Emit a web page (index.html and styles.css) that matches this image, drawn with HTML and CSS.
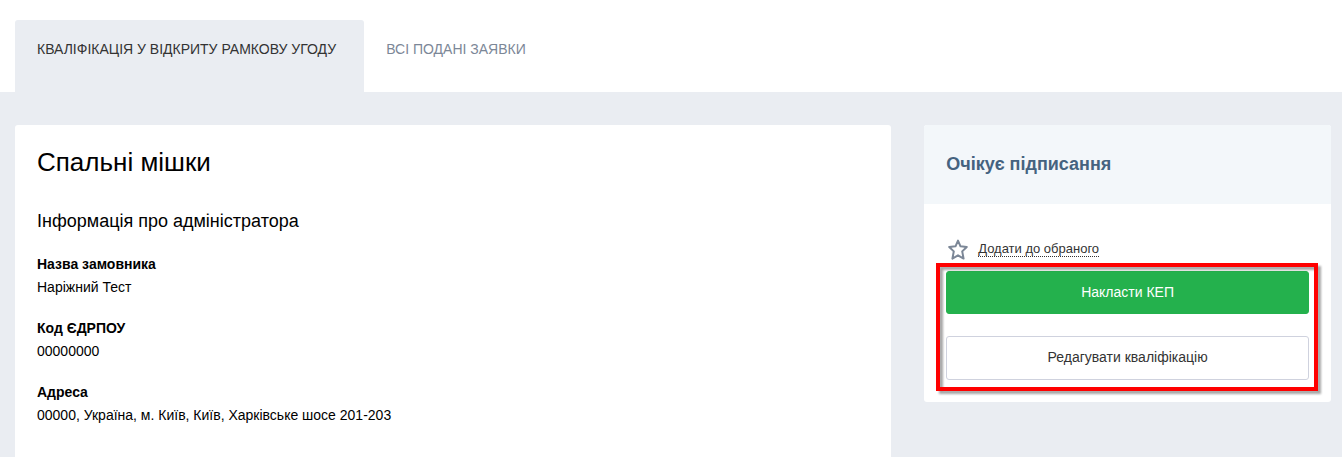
FILE: index.html
```html
<!DOCTYPE html>
<html lang="uk">
<head>
  <meta charset="UTF-8">
  <meta name="viewport" content="width=device-width, initial-scale=1.0">
  <title>Спальні мішки</title>
  <link rel="stylesheet" href="styles.css">
</head>
<body>

  <nav class="tabs">
    <a href="#qualification" class="tab active">Кваліфікація у відкриту рамкову угоду</a>
    <a href="#bids" class="tab">Всі подані заявки</a>
  </nav>

  <main class="content">
    <section class="card tender" id="qualification">
      <h1>Спальні мішки</h1>
      <h2>Інформація про адміністратора</h2>
      <dl class="details">
        <div class="detail">
          <dt>Назва замовника</dt>
          <dd>Наріжний Тест</dd>
        </div>
        <div class="detail">
          <dt>Код ЄДРПОУ</dt>
          <dd>00000000</dd>
        </div>
        <div class="detail">
          <dt>Адреса</dt>
          <dd>00000, Україна, м. Київ, Київ, Харківське шосе 201-203</dd>
        </div>
      </dl>
    </section>

    <aside class="card sidebar">
      <div class="status">Очікує підписання</div>
      <div class="sidebar-body">
        <a href="#favorite" class="favorite">
          <svg class="star" viewBox="0 0 24 24" aria-hidden="true">
            <path d="M12 3.6 L14.5 9.3 L20.8 10 L16.2 14.4 L17.6 21.6 L12 18.3 L6.4 21.6 L7.8 14.4 L3.2 10 L9.5 9.3 Z"/>
          </svg>
          <span class="favorite-text">Додати до обраного</span>
        </a>
        <div class="actions">
          <button type="button" class="btn btn-primary">Накласти КЕП</button>
          <button type="button" class="btn">Редагувати кваліфікацію</button>
        </div>
      </div>
    </aside>
  </main>

</body>
</html>
```
FILE: styles.css
```css
/* Basic Reset */
* {
  margin: 0;
  padding: 0;
  box-sizing: border-box;
}

body {
  display: flex;
  flex-direction: column;
  min-height: 100vh;
  font-family: "Liberation Sans", Arial, sans-serif;
  font-size: 14px;
  line-height: 20px;
  color: #000;
  background: #eaedf2;
}

/* Tabs */
.tabs {
  display: flex;
  padding: 20px 15px 0;
  background: #fff;
}

.tab {
  padding: 19px 28px 33px 22px;
  border-radius: 3px 3px 0 0;
  color: #7c8797;
  text-decoration: none;
  text-transform: uppercase;
}

.tab.active {
  color: #333;
  background: #eaedf2;
}

/* Page columns */
.content {
  display: grid;
  flex: 1;
  grid-template-columns: 28fr 13fr;
  gap: 33px;
  padding: 33px 11px 0 15px;
}

.card {
  border-radius: 3px;
  background: #fff;
}

/* Tender info */
.tender {
  padding: 22px 22px 0;
  border-radius: 3px 3px 0 0;
}

.tender h1 {
  margin-bottom: 32px;
  font-size: 26px;
  font-weight: normal;
  line-height: 30px;
}

.tender h2 {
  margin-bottom: 20px;
  font-size: 18px;
  font-weight: normal;
  line-height: 24px;
}

.details {
  display: flex;
  flex-direction: column;
  gap: 18px;
}

.detail {
  line-height: 23px;
}

.detail dt {
  font-weight: bold;
}

/* Sidebar */
.sidebar {
  align-self: start;
}

.status {
  padding: 28px 22px;
  border-radius: 3px 3px 0 0;
  font-size: 18px;
  font-weight: bold;
  line-height: 23px;
  color: #456380;
  background: #f3f7fa;
}

.sidebar-body {
  padding: 33px 22px 22px;
}

.favorite {
  display: flex;
  align-items: center;
  gap: 8px;
  padding-bottom: 10px;
  font-size: 13px;
  color: #333;
  text-decoration: none;
}

.star {
  width: 24px;
  height: 24px;
  fill: none;
  stroke: #7c8797;
  stroke-width: 2;
  stroke-linejoin: round;
}

.favorite-text {
  border-bottom: 1px dotted #333;
  line-height: 15px;
}

.actions {
  position: relative;
  display: flex;
  flex-direction: column;
  gap: 22px;
}

/* Highlight frame over both buttons */
.actions::after {
  content: "";
  position: absolute;
  inset: -8px -9px -11px -10px;
  border: 4px solid #f00;
  filter: drop-shadow(3px 3px 1px rgba(0, 0, 0, 0.35));
  pointer-events: none;
}

.btn {
  height: 44px;
  padding-bottom: 2px;
  border: 1px solid #cfd2de;
  border-radius: 3px;
  font: inherit;
  color: #333;
  background: #fff;
  cursor: pointer;
}

.btn-primary {
  height: 43px;
  border-color: #24b14d;
  color: #fff;
  background: #24b14d;
}
```
